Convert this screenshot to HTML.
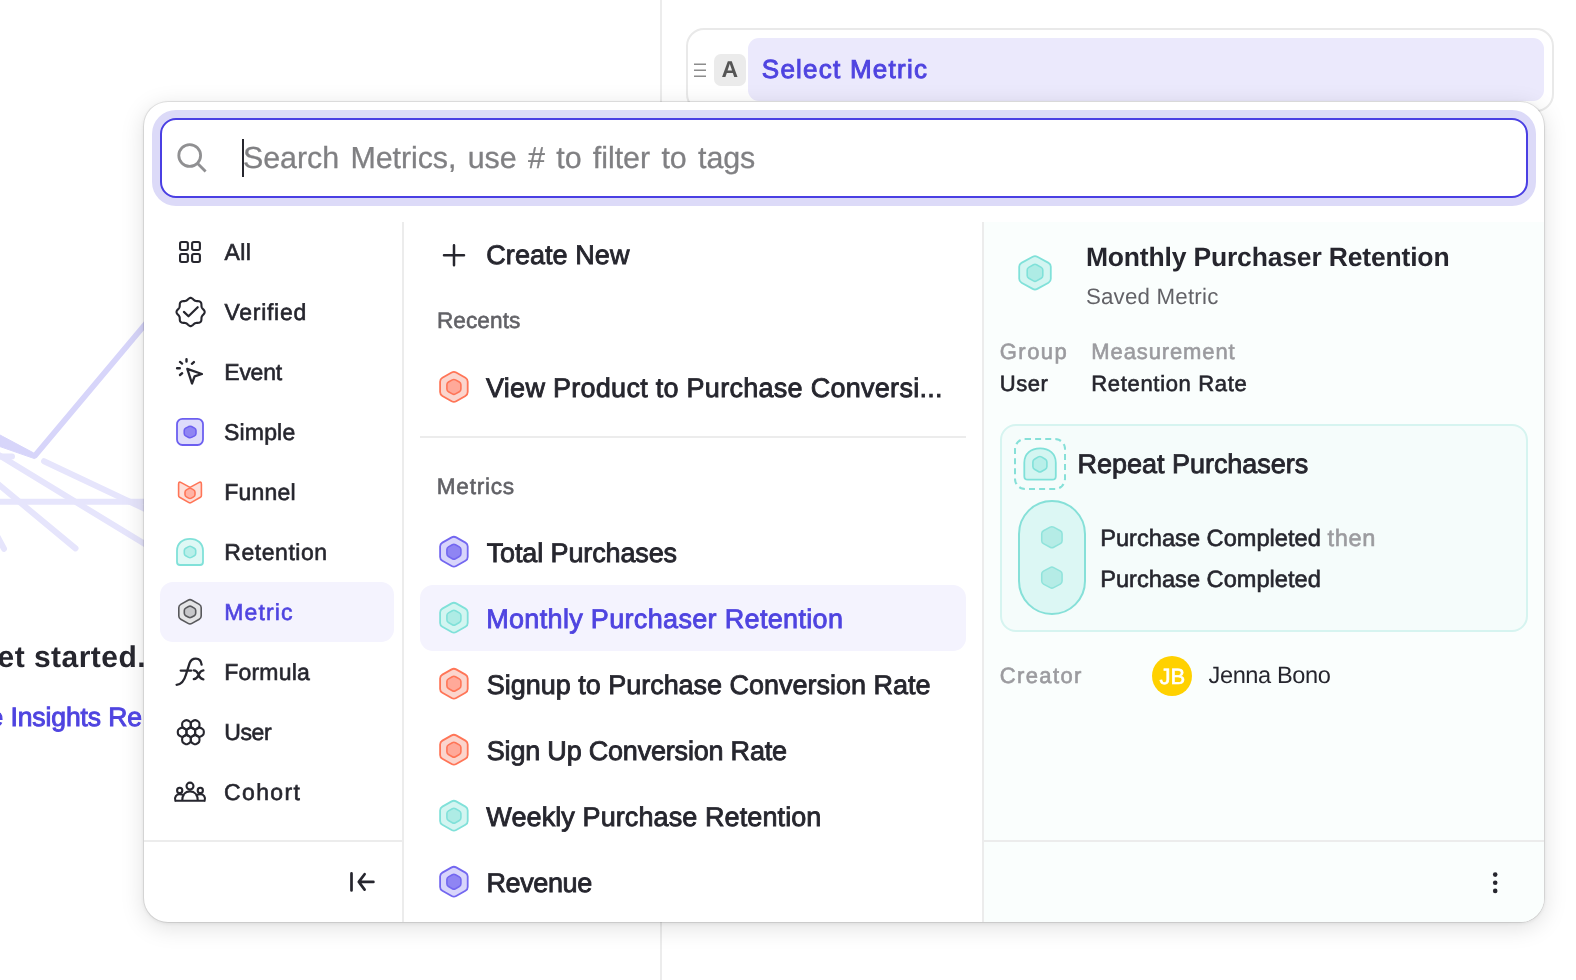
<!DOCTYPE html>
<html lang="en">
<head>
<meta charset="utf-8">
<title>Select Metric</title>
<style>
*{box-sizing:border-box;margin:0;padding:0}
html,body{width:1576px;height:980px;overflow:hidden;background:#fff}
body{position:relative;font-family:"Liberation Sans",sans-serif;color:#26262e}
#root{position:absolute;left:0;top:0;width:1576px;height:980px;overflow:hidden;will-change:transform}
.abs,.ic{position:absolute}
.ic{overflow:visible}
.t{position:absolute;white-space:nowrap;line-height:1;text-rendering:geometricPrecision}
.med{-webkit-text-stroke:0.6px currentColor}
.med2{-webkit-text-stroke:0.85px currentColor}
.lt{-webkit-text-stroke:0.3px currentColor}
.semi{-webkit-text-stroke:0.95px currentColor}
#vline{left:660px;top:0;width:2px;height:980px;background:#ececec}
#bgart{left:0;top:300px;width:160px;height:280px}
#card{left:686px;top:28px;width:868px;height:84px;border:2px solid #e9e9e9;border-radius:18px;background:#fff}
#pill{left:748px;top:38px;width:796px;height:63px;border-radius:11px;background:#ebe9fc}
#badgeA{left:714px;top:54px;width:32px;height:32px;border-radius:7px;background:#ebebeb}
#pop{left:144px;top:102px;width:1400px;height:820px;border-radius:24px;background:#fff;
 box-shadow:0 0 0 1px rgba(0,0,0,.09),0 5px 24px rgba(0,0,0,.13),0 1px 5px rgba(0,0,0,.09)}
#right{left:984px;top:222px;width:560px;height:700px;background:#fafefd;border-radius:0 0 24px 0}
#search{left:160px;top:118px;width:1368px;height:80px;border:2px solid #4a3fe3;border-radius:16px;background:#fff;box-shadow:0 0 0 8px #dcdaf8}
#caret{left:242px;top:139px;width:2px;height:38px;background:#26262e}
.dv{background:#ececec}
.sel{background:#f4f3fe;border-radius:13px}
#rbox{left:1000px;top:424px;width:528px;height:208px;border:2px solid #d6f4f0;border-radius:16px;background:#f5fcfb}
#dash{left:1014px;top:438px;width:52px;height:52px;border:2px dashed #86e0d8;border-radius:11px}
#rpill{left:1018px;top:500px;width:68px;height:115px;border:2px solid #86e0d8;border-radius:34px;background:#dcf7f4}
#avatar{left:1152px;top:656px;width:40px;height:40px;border-radius:50%;background:#ffd100}
</style>
</head>

<body>
<div id="root">
<!-- page behind the popup -->
<div id="vline" class="abs"></div>
<svg id="bgart" class="abs" viewBox="0 300 160 280" fill="none" stroke-linecap="round" stroke-linejoin="round">
 <g stroke="#e6e5fc" stroke-width="6">
  <path d="M-4 456.4H12"/><path d="M44 461.2L160 516"/><path d="M-4 453.3L160 553.3"/><path d="M-4 501.7H150"/><path d="M-4 482.4L75.5 548.4"/><path d="M-4 534L4 548.8"/>
 </g>
 <path d="M35 455.6L150 318.6" stroke="#d7d5fa" stroke-width="5.6"/>
 <path d="M0 435L33 452.6L37 456.4L34.4 458.6L0 446.6Z" fill="#d7d5fa" stroke="#d7d5fa" stroke-width="1"/>
</svg>
<!-- query card -->
<div id="card" class="abs"></div>
<div id="pill" class="abs"></div>
<div id="badgeA" class="abs"></div>
<!-- popup -->
<div id="pop" class="abs"></div>
<div id="right" class="abs"></div>
<div id="search" class="abs"></div>
<div id="caret" class="abs"></div>
<div class="abs dv" style="left:402px;top:222px;width:2px;height:700px"></div>
<div class="abs dv" style="left:982px;top:222px;width:2px;height:700px"></div>
<div class="abs dv" style="left:144px;top:840px;width:258px;height:2px"></div>
<div class="abs dv" style="left:984px;top:840px;width:560px;height:2px"></div>
<div class="abs dv" style="left:420px;top:436px;width:546px;height:2px"></div>
<div class="abs sel" style="left:160px;top:582px;width:234px;height:60px"></div>
<div class="abs sel" style="left:420px;top:585px;width:546px;height:66px"></div>
<div id="rbox" class="abs"></div>
<div id="dash" class="abs"></div>
<div id="rpill" class="abs"></div>
<div id="avatar" class="abs"></div>

<!-- icons -->
<svg class="ic" style="left:0;top:0" width="1576" height="980" viewBox="0 0 1576 980" fill="none" stroke-linecap="round" stroke-linejoin="round"><path d="M694 64.2h12M694 70.2h12M694 76.3h12" stroke="#8c8c8c" stroke-width="1.6" stroke-linecap="butt"/><g stroke="#909092" stroke-width="2.8" stroke-linecap="butt"><circle cx="189.7" cy="155.5" r="10.9"/><path d="M197.4 163.2L205.6 171.4"/></g><g stroke="#26262e" stroke-width="2.1"><rect x="180.05" y="242" width="7.8" height="8" rx="1.7"/><rect x="180.05" y="254" width="7.8" height="8" rx="1.7"/><rect x="192.1" y="242" width="7.8" height="8" rx="1.7"/><rect x="192.1" y="254" width="7.8" height="8" rx="1.7"/><path d="M190.6 297.9L191.51 298.08L192.37 298.56L193.14 299.22L193.84 299.89L194.52 300.45L195.23 300.82L196 301.06L196.87 301.14L197.84 301.16L198.85 301.24L199.8 301.51L200.57 302.03L201.09 302.8L201.36 303.75L201.44 304.76L201.46 305.73L201.54 306.6L201.78 307.37L202.15 308.08L202.71 308.76L203.38 309.46L204.04 310.23L204.52 311.09L204.7 312L204.52 312.91L204.04 313.77L203.38 314.54L202.71 315.24L202.15 315.92L201.78 316.63L201.54 317.4L201.46 318.27L201.44 319.24L201.36 320.25L201.09 321.2L200.57 321.97L199.8 322.49L198.85 322.76L197.84 322.84L196.87 322.86L196 322.94L195.23 323.18L194.52 323.55L193.84 324.11L193.14 324.78L192.37 325.44L191.51 325.92L190.6 326.1L189.69 325.92L188.83 325.44L188.06 324.78L187.36 324.11L186.68 323.55L185.97 323.18L185.2 322.94L184.33 322.86L183.36 322.84L182.35 322.76L181.4 322.49L180.63 321.97L180.11 321.2L179.84 320.25L179.76 319.24L179.74 318.27L179.66 317.4L179.42 316.63L179.05 315.92L178.49 315.24L177.82 314.54L177.16 313.77L176.68 312.91L176.5 312L176.68 311.09L177.16 310.23L177.82 309.46L178.49 308.76L179.05 308.08L179.42 307.37L179.66 306.6L179.74 305.73L179.76 304.76L179.84 303.75L180.11 302.8L180.63 302.03L181.4 301.51L182.35 301.24L183.36 301.16L184.33 301.14L185.2 301.06L185.97 300.82L186.68 300.45L187.36 299.89L188.06 299.22L188.83 298.56L189.69 298.08Z"/><path d="M183.9 311.9L188.5 316.3L197.7 307.2" stroke-width="2.2"/><path d="M187.3 368.9L201.9 374L194.6 376.3L192 383.5Z" stroke-width="2.3"/><path d="M186.5 359.2V361.6M180 361.9L182.1 363.6M193.9 362.1L191.9 363.8M177.1 368.3H179.8M180 375L182.1 373.3" stroke-width="2.4"/><path d="M176.6 684.8C182.5 684.5 184.6 679.5 186 674.5L189.6 663.2C190.8 659.8 193.2 658.6 195.8 658.6C199.2 658.6 201.2 661.2 201.6 664.6M180.7 670.6H191.3" stroke-width="2.3"/><path d="M193.8 670.4C197.5 670.6 198 674 198.6 674.9C199.3 676 200 678.8 203.4 679.3M203.4 670.3C199.8 670.6 199.3 674 198.6 674.9C198 676 197.3 678.8 193.8 679.1" stroke-width="2.3"/><path d="M189.41 728Q190.8 727.2 192.19 728L193.74 728.9Q195.13 729.7 195.13 731.3L195.13 733.1Q195.13 734.7 193.74 735.5L192.19 736.4Q190.8 737.2 189.41 736.4L187.86 735.5Q186.47 734.7 186.47 733.1L186.47 731.3Q186.47 729.7 187.86 728.9Z"/><path d="M198.07 728Q199.46 727.2 200.85 728L202.4 728.9Q203.79 729.7 203.79 731.3L203.79 733.1Q203.79 734.7 202.4 735.5L200.85 736.4Q199.46 737.2 198.07 736.4L196.52 735.5Q195.13 734.7 195.13 733.1L195.13 731.3Q195.13 729.7 196.52 728.9Z"/><path d="M193.74 735.5Q195.13 734.7 196.52 735.5L198.07 736.4Q199.46 737.2 199.46 738.8L199.46 740.6Q199.46 742.2 198.07 743L196.52 743.9Q195.13 744.7 193.74 743.9L192.19 743Q190.8 742.2 190.8 740.6L190.8 738.8Q190.8 737.2 192.19 736.4Z"/><path d="M185.08 735.5Q186.47 734.7 187.86 735.5L189.41 736.4Q190.8 737.2 190.8 738.8L190.8 740.6Q190.8 742.2 189.41 743L187.86 743.9Q186.47 744.7 185.08 743.9L183.53 743Q182.14 742.2 182.14 740.6L182.14 738.8Q182.14 737.2 183.53 736.4Z"/><path d="M180.75 728Q182.14 727.2 183.53 728L185.08 728.9Q186.47 729.7 186.47 731.3L186.47 733.1Q186.47 734.7 185.08 735.5L183.53 736.4Q182.14 737.2 180.75 736.4L179.2 735.5Q177.81 734.7 177.81 733.1L177.81 731.3Q177.81 729.7 179.2 728.9Z"/><path d="M185.08 720.5Q186.47 719.7 187.86 720.5L189.41 721.4Q190.8 722.2 190.8 723.8L190.8 725.6Q190.8 727.2 189.41 728L187.86 728.9Q186.47 729.7 185.08 728.9L183.53 728Q182.14 727.2 182.14 725.6L182.14 723.8Q182.14 722.2 183.53 721.4Z"/><path d="M193.74 720.5Q195.13 719.7 196.52 720.5L198.07 721.4Q199.46 722.2 199.46 723.8L199.46 725.6Q199.46 727.2 198.07 728L196.52 728.9Q195.13 729.7 193.74 728.9L192.19 728Q190.8 727.2 190.8 725.6L190.8 723.8Q190.8 722.2 192.19 721.4Z"/><circle cx="190" cy="786.1" r="3.5"/><circle cx="179.7" cy="790.4" r="2.6"/><circle cx="200.3" cy="790.4" r="2.6"/><path d="M175.4 800.8H204.6M182.2 800.8C182.2 795 185.2 791.4 190 791.4C194.8 791.4 197.8 795 197.8 800.8M175.4 800.8C174 797 176.5 794.2 179.6 794.2C181.3 794.2 182.6 794.6 183.6 795.3M204.6 800.8C206 797 203.5 794.2 200.4 794.2C198.7 794.2 197.4 794.6 196.4 795.3"/></g><rect x="177" y="418.9" width="26" height="26.1" rx="5.4" fill="#dedcfb" stroke="#6c5ff0" stroke-width="1.8"/><path d="M188.68 426.54Q190.1 425.8 191.52 426.54L194.58 428.16Q196 428.9 196 430.5L196 433.5Q196 435.1 194.58 435.84L191.52 437.46Q190.1 438.2 188.68 437.46L185.62 435.84Q184.2 435.1 184.2 433.5L184.2 430.5Q184.2 428.9 185.62 428.16Z" fill="#8f85f3" stroke="#6c5ff0" stroke-width="1.5"/><path d="M178.6 484.2Q178.6 481.2 181.2 482.6L190 487.4L198.8 482.6Q201.4 481.2 201.4 484.2V495.4Q201.4 496.6 200.4 497.2L191 502.6Q190 503.2 189 502.6L179.6 497.2Q178.6 496.6 178.6 495.4Z" fill="#fde0da" stroke="#ff7557" stroke-width="1.6"/><path d="M188.6 488.67Q190 487.9 191.4 488.67L193.6 489.88Q195 490.65 195 492.25L195 494.55Q195 496.15 193.6 496.92L191.4 498.13Q190 498.9 188.6 498.13L186.4 496.92Q185 496.15 185 494.55L185 492.25Q185 490.65 186.4 489.88Z" fill="#ffb3a5" stroke="#ff7557" stroke-width="1.6"/><path d="M177 562V550.74C177 543.34 182.46 538.8 190 538.8C197.54 538.8 203 543.34 203 550.74V562Q203 565 200 565H180Q177 565 177 562Z" fill="#dff8f5" stroke="#80e1d9" stroke-width="1.8"/><path d="M188.59 546.65Q190 545.9 191.41 546.65L194.29 548.2Q195.7 548.95 195.7 550.55L195.7 553.45Q195.7 555.05 194.29 555.8L191.41 557.35Q190 558.1 188.59 557.35L185.71 555.8Q184.3 555.05 184.3 553.45L184.3 550.55Q184.3 548.95 185.71 548.2Z" fill="#b8efe9" stroke="#80e1d9" stroke-width="1.6"/><path d="M188.09 600.19Q190 599.1 191.91 600.19L199.29 604.36Q201.2 605.45 201.2 607.65L201.2 615.95Q201.2 618.15 199.29 619.24L191.91 623.41Q190 624.5 188.09 623.41L180.71 619.24Q178.8 618.15 178.8 615.95L178.8 607.65Q178.8 605.45 180.71 604.36Z" fill="#e4e4e6" stroke="#58585c" stroke-width="1.6"/><path d="M188.59 606.55Q190 605.8 191.41 606.55L194.29 608.1Q195.7 608.85 195.7 610.45L195.7 613.35Q195.7 614.95 194.29 615.7L191.41 617.25Q190 618 188.59 617.25L185.71 615.7Q184.3 614.95 184.3 613.35L184.3 610.45Q184.3 608.85 185.71 608.1Z" fill="#c6c6c9" stroke="#58585c" stroke-width="1.6"/><path d="M351.5 873.4V890.4M373.4 881.9H358.9M364.6 874.2L358.8 881.9L364.6 889.6" stroke="#26262e" stroke-width="2.7"/><path d="M444 255.2H464M454 245.2V265.2" stroke="#26262e" stroke-width="2.5"/><g fill="#26262e"><circle cx="1495.2" cy="874.6" r="2.3"/><circle cx="1495.2" cy="882.7" r="2.3"/><circle cx="1495.2" cy="890.9" r="2.3"/></g><path d="M451.64 372.58Q453.9 371.3 456.16 372.58L465.44 377.82Q467.7 379.1 467.7 381.7L467.7 392.1Q467.7 394.7 465.44 395.98L456.16 401.22Q453.9 402.5 451.64 401.22L442.36 395.98Q440.1 394.7 440.1 392.1L440.1 381.7Q440.1 379.1 442.36 377.82Z" fill="#fbd5cd" stroke="#ff7557" stroke-width="1.8"/><path d="M452.33 379.88Q453.9 379 455.47 379.88L459.33 382.07Q460.9 382.95 460.9 384.75L460.9 389.05Q460.9 390.85 459.33 391.73L455.47 393.92Q453.9 394.8 452.33 393.92L448.47 391.73Q446.9 390.85 446.9 389.05L446.9 384.75Q446.9 382.95 448.47 382.07Z" fill="#ffa999" stroke="#ff7557" stroke-width="1.6"/><path d="M451.64 537.38Q453.9 536.1 456.16 537.38L465.44 542.62Q467.7 543.9 467.7 546.5L467.7 556.9Q467.7 559.5 465.44 560.78L456.16 566.02Q453.9 567.3 451.64 566.02L442.36 560.78Q440.1 559.5 440.1 556.9L440.1 546.5Q440.1 543.9 442.36 542.62Z" fill="#d8d5fb" stroke="#7367f0" stroke-width="1.8"/><path d="M452.33 544.68Q453.9 543.8 455.47 544.68L459.33 546.87Q460.9 547.75 460.9 549.55L460.9 553.85Q460.9 555.65 459.33 556.53L455.47 558.72Q453.9 559.6 452.33 558.72L448.47 556.53Q446.9 555.65 446.9 553.85L446.9 549.55Q446.9 547.75 448.47 546.87Z" fill="#8f85f3" stroke="#7367f0" stroke-width="1.6"/><path d="M451.64 603.38Q453.9 602.1 456.16 603.38L465.44 608.62Q467.7 609.9 467.7 612.5L467.7 622.9Q467.7 625.5 465.44 626.78L456.16 632.02Q453.9 633.3 451.64 632.02L442.36 626.78Q440.1 625.5 440.1 622.9L440.1 612.5Q440.1 609.9 442.36 608.62Z" fill="#d3f5f1" stroke="#80e1d9" stroke-width="1.8"/><path d="M452.33 610.68Q453.9 609.8 455.47 610.68L459.33 612.87Q460.9 613.75 460.9 615.55L460.9 619.85Q460.9 621.65 459.33 622.53L455.47 624.72Q453.9 625.6 452.33 624.72L448.47 622.53Q446.9 621.65 446.9 619.85L446.9 615.55Q446.9 613.75 448.47 612.87Z" fill="#aeece5" stroke="#80e1d9" stroke-width="1.6"/><path d="M451.64 669.38Q453.9 668.1 456.16 669.38L465.44 674.62Q467.7 675.9 467.7 678.5L467.7 688.9Q467.7 691.5 465.44 692.78L456.16 698.02Q453.9 699.3 451.64 698.02L442.36 692.78Q440.1 691.5 440.1 688.9L440.1 678.5Q440.1 675.9 442.36 674.62Z" fill="#fbd5cd" stroke="#ff7557" stroke-width="1.8"/><path d="M452.33 676.68Q453.9 675.8 455.47 676.68L459.33 678.87Q460.9 679.75 460.9 681.55L460.9 685.85Q460.9 687.65 459.33 688.53L455.47 690.72Q453.9 691.6 452.33 690.72L448.47 688.53Q446.9 687.65 446.9 685.85L446.9 681.55Q446.9 679.75 448.47 678.87Z" fill="#ffa999" stroke="#ff7557" stroke-width="1.6"/><path d="M451.64 735.38Q453.9 734.1 456.16 735.38L465.44 740.62Q467.7 741.9 467.7 744.5L467.7 754.9Q467.7 757.5 465.44 758.78L456.16 764.02Q453.9 765.3 451.64 764.02L442.36 758.78Q440.1 757.5 440.1 754.9L440.1 744.5Q440.1 741.9 442.36 740.62Z" fill="#fbd5cd" stroke="#ff7557" stroke-width="1.8"/><path d="M452.33 742.68Q453.9 741.8 455.47 742.68L459.33 744.87Q460.9 745.75 460.9 747.55L460.9 751.85Q460.9 753.65 459.33 754.53L455.47 756.72Q453.9 757.6 452.33 756.72L448.47 754.53Q446.9 753.65 446.9 751.85L446.9 747.55Q446.9 745.75 448.47 744.87Z" fill="#ffa999" stroke="#ff7557" stroke-width="1.6"/><path d="M451.64 801.38Q453.9 800.1 456.16 801.38L465.44 806.62Q467.7 807.9 467.7 810.5L467.7 820.9Q467.7 823.5 465.44 824.78L456.16 830.02Q453.9 831.3 451.64 830.02L442.36 824.78Q440.1 823.5 440.1 820.9L440.1 810.5Q440.1 807.9 442.36 806.62Z" fill="#d3f5f1" stroke="#80e1d9" stroke-width="1.8"/><path d="M452.33 808.68Q453.9 807.8 455.47 808.68L459.33 810.87Q460.9 811.75 460.9 813.55L460.9 817.85Q460.9 819.65 459.33 820.53L455.47 822.72Q453.9 823.6 452.33 822.72L448.47 820.53Q446.9 819.65 446.9 817.85L446.9 813.55Q446.9 811.75 448.47 810.87Z" fill="#aeece5" stroke="#80e1d9" stroke-width="1.6"/><path d="M451.64 867.38Q453.9 866.1 456.16 867.38L465.44 872.62Q467.7 873.9 467.7 876.5L467.7 886.9Q467.7 889.5 465.44 890.78L456.16 896.02Q453.9 897.3 451.64 896.02L442.36 890.78Q440.1 889.5 440.1 886.9L440.1 876.5Q440.1 873.9 442.36 872.62Z" fill="#d8d5fb" stroke="#7367f0" stroke-width="1.8"/><path d="M452.33 874.68Q453.9 873.8 455.47 874.68L459.33 876.87Q460.9 877.75 460.9 879.55L460.9 883.85Q460.9 885.65 459.33 886.53L455.47 888.72Q453.9 889.6 452.33 888.72L448.47 886.53Q446.9 885.65 446.9 883.85L446.9 879.55Q446.9 877.75 448.47 876.87Z" fill="#8f85f3" stroke="#7367f0" stroke-width="1.6"/><path d="M1032.72 256.75Q1035 255.5 1037.28 256.75L1048.52 262.9Q1050.8 264.15 1050.8 266.75L1050.8 278.85Q1050.8 281.45 1048.52 282.7L1037.28 288.85Q1035 290.1 1032.72 288.85L1021.48 282.7Q1019.2 281.45 1019.2 278.85L1019.2 266.75Q1019.2 264.15 1021.48 262.9Z" fill="#d3f5f1" stroke="#80e1d9" stroke-width="1.8"/><path d="M1033.44 264.7Q1035 263.8 1036.56 264.7L1041.24 267.4Q1042.8 268.3 1042.8 270.1L1042.8 275.5Q1042.8 277.3 1041.24 278.2L1036.56 280.9Q1035 281.8 1033.44 280.9L1028.76 278.2Q1027.2 277.3 1027.2 275.5L1027.2 270.1Q1027.2 268.3 1028.76 267.4Z" fill="#aeece5" stroke="#80e1d9" stroke-width="1.6"/><path d="M1024.3 476.2V462.76C1024.3 453.8 1030.91 448.3 1040.05 448.3C1049.18 448.3 1055.8 453.8 1055.8 462.76V476.2Q1055.8 479.7 1052.3 479.7H1027.8Q1024.3 479.7 1024.3 476.2Z" fill="#d3f5f1" stroke="#80e1d9" stroke-width="1.8"/><path d="M1038.35 456.91Q1039.9 456 1041.45 456.91L1045.35 459.19Q1046.9 460.1 1046.9 461.9L1046.9 466.5Q1046.9 468.3 1045.35 469.21L1041.45 471.49Q1039.9 472.4 1038.35 471.49L1034.45 469.21Q1032.9 468.3 1032.9 466.5L1032.9 461.9Q1032.9 460.1 1034.45 459.19Z" fill="#b8efe9" stroke="#80e1d9" stroke-width="1.6"/><path d="M1050.14 527.15Q1051.9 526.2 1053.66 527.15L1060.34 530.75Q1062.1 531.7 1062.1 533.7L1062.1 540.7Q1062.1 542.7 1060.34 543.65L1053.66 547.25Q1051.9 548.2 1050.14 547.25L1043.46 543.65Q1041.7 542.7 1041.7 540.7L1041.7 533.7Q1041.7 531.7 1043.46 530.75Z" fill="#b5ece6" stroke="#8fe3db" stroke-width="1.5"/><path d="M1050.14 567.55Q1051.9 566.6 1053.66 567.55L1060.34 571.15Q1062.1 572.1 1062.1 574.1L1062.1 581.1Q1062.1 583.1 1060.34 584.05L1053.66 587.65Q1051.9 588.6 1050.14 587.65L1043.46 584.05Q1041.7 583.1 1041.7 581.1L1041.7 574.1Q1041.7 572.1 1043.46 571.15Z" fill="#b5ece6" stroke="#8fe3db" stroke-width="1.5"/></svg>

<!-- text -->
<div class="t" style="left:-2.5px;top:643.00px;font-size:30px;color:#26262e;letter-spacing:0.47px;font-weight:bold">et started.</div>
<div class="t semi" style="left:-11.5px;top:704.00px;font-size:26.5px;color:#4f44e0;letter-spacing:-0.10px">e Insights Re</div>
<div class="t" style="left:721.5px;top:58.00px;font-size:23px;color:#555;font-weight:bold">A</div>
<div class="t semi" style="left:761.8px;top:56.00px;font-size:26px;color:#4f44e0;letter-spacing:1.24px">Select Metric</div>
<div class="t lt" style="left:243.0px;top:143.00px;font-size:30.4px;color:#808083;letter-spacing:-0.05px;word-spacing:3.0px">Search Metrics, use # to filter to tags</div>
<div class="t med" style="left:224.4px;top:241.00px;font-size:23px;color:#26262e;letter-spacing:0.42px">All</div>
<div class="t med" style="left:224.4px;top:301.00px;font-size:23px;color:#26262e;letter-spacing:0.74px">Verified</div>
<div class="t med" style="left:224.3px;top:361.00px;font-size:23px;color:#26262e;letter-spacing:-0.26px">Event</div>
<div class="t med" style="left:224.0px;top:421.00px;font-size:23px;color:#26262e;letter-spacing:0.18px">Simple</div>
<div class="t med" style="left:224.3px;top:481.00px;font-size:23px;color:#26262e;letter-spacing:0.18px">Funnel</div>
<div class="t med" style="left:224.3px;top:541.00px;font-size:23px;color:#26262e;letter-spacing:0.55px">Retention</div>
<div class="t med" style="left:224.3px;top:601.00px;font-size:23px;color:#4f44e0;letter-spacing:1.10px">Metric</div>
<div class="t med" style="left:224.3px;top:661.00px;font-size:23px;color:#26262e;letter-spacing:0.19px">Formula</div>
<div class="t med" style="left:224.3px;top:721.00px;font-size:23px;color:#26262e;letter-spacing:-0.40px">User</div>
<div class="t med" style="left:224.0px;top:781.00px;font-size:23px;color:#26262e;letter-spacing:1.37px">Cohort</div>
<div class="t med2" style="left:486.3px;top:242.00px;font-size:27px;color:#26262e;letter-spacing:0.06px">Create New</div>
<div class="t med" style="left:436.9px;top:310.00px;font-size:22.6px;color:#626267;letter-spacing:0.10px">Recents</div>
<div class="t med2" style="left:486.0px;top:375.00px;font-size:27px;color:#26262e;letter-spacing:0.28px">View Product to Purchase Conversi...</div>
<div class="t med" style="left:436.8px;top:476.00px;font-size:22.6px;color:#626267;letter-spacing:0.73px">Metrics</div>
<div class="t med2" style="left:486.7px;top:540.00px;font-size:27px;color:#26262e;letter-spacing:-0.12px">Total Purchases</div>
<div class="t med2" style="left:486.2px;top:606.00px;font-size:27px;color:#4f44e0;letter-spacing:0.33px">Monthly Purchaser Retention</div>
<div class="t med2" style="left:486.8px;top:672.00px;font-size:27px;color:#26262e;letter-spacing:-0.02px">Signup to Purchase Conversion Rate</div>
<div class="t med2" style="left:486.8px;top:738.00px;font-size:27px;color:#26262e;letter-spacing:-0.20px">Sign Up Conversion Rate</div>
<div class="t med2" style="left:486.3px;top:804.00px;font-size:27px;color:#26262e;letter-spacing:0.10px">Weekly Purchase Retention</div>
<div class="t med2" style="left:486.5px;top:870.00px;font-size:27px;color:#26262e;letter-spacing:-0.39px">Revenue</div>
<div class="t" style="left:1085.9px;top:244.00px;font-size:26.5px;color:#26262e;letter-spacing:-0.17px;font-weight:bold">Monthly Purchaser Retention</div>
<div class="t" style="left:1085.9px;top:286.00px;font-size:22.3px;color:#626267;letter-spacing:0.21px">Saved Metric</div>
<div class="t med" style="left:999.7px;top:341.00px;font-size:22px;color:#9b9b9f;letter-spacing:1.50px">Group</div>
<div class="t med" style="left:1091.3px;top:341.00px;font-size:22px;color:#9b9b9f;letter-spacing:0.89px">Measurement</div>
<div class="t med" style="left:999.7px;top:373.00px;font-size:22px;color:#26262e;letter-spacing:0.59px">User</div>
<div class="t med" style="left:1091.3px;top:373.00px;font-size:22px;color:#26262e;letter-spacing:0.67px">Retention Rate</div>
<div class="t med2" style="left:1077.6px;top:451.00px;font-size:27px;color:#26262e;letter-spacing:-0.03px">Repeat Purchasers</div>
<div class="t med" style="left:1100.2px;top:528.00px;font-size:23.6px;color:#26262e;letter-spacing:0.02px">Purchase Completed</div>
<div class="t med" style="left:1327.4px;top:528.00px;font-size:23.6px;color:#9b9b9f;letter-spacing:0.70px">then</div>
<div class="t med" style="left:1100.2px;top:569.00px;font-size:23.6px;color:#26262e;letter-spacing:0.02px">Purchase Completed</div>
<div class="t med" style="left:999.7px;top:665.00px;font-size:22px;color:#9b9b9f;letter-spacing:1.38px">Creator</div>
<div class="t med" style="left:1159.5px;top:666.00px;font-size:22px;color:#fff">JB</div>
<div class="t" style="left:1208.5px;top:665.00px;font-size:23.6px;color:#26262e;letter-spacing:-0.39px">Jenna Bono</div>
</div>
</body>
</html>
